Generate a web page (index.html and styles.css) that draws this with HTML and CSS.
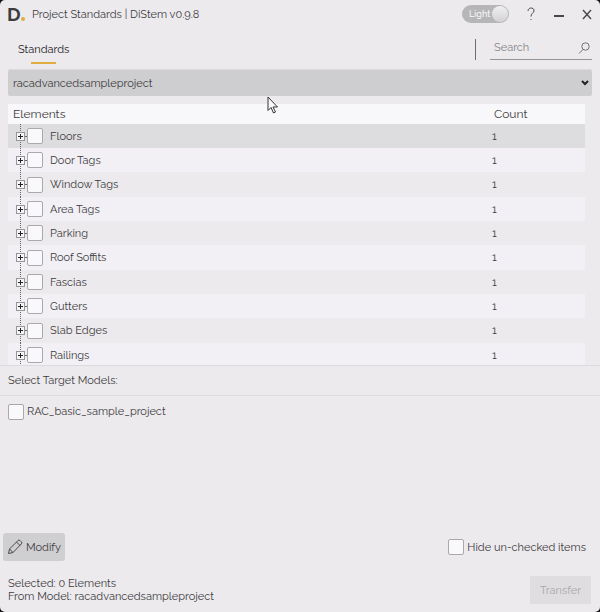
FILE: index.html
```html
<!DOCTYPE html>
<html lang="en">
<head>
<meta charset="utf-8">
<meta name="viewport" content="width=device-width, initial-scale=1">
<title>Project Standards | DiStem v0.9.8</title>
<link rel="stylesheet" href="styles.css">
</head>
<body>
<div class="window">
  <header class="titlebar">
    <span class="logo">D<span class="logo-dot"></span></span>
    <h1 class="title">Project Standards | DiStem v0.9.8</h1>
    <label class="theme"><input type="checkbox" role="switch" checked><span>Light</span></label>
    <button class="win-btn help" type="button" aria-label="Help">
      <svg width="10" height="14" viewBox="0 0 10 14"><path d="M2 4C2 0 8.500 0 8 4C7.700 6 5 6.500 5 9.500M5 12v1"/></svg>
    </button>
    <button class="win-btn" type="button" aria-label="Minimize">
      <svg width="12" height="14" viewBox="0 0 12 14"><path class="heavy" d="M1 9h10"/></svg>
    </button>
    <button class="win-btn" type="button" aria-label="Close">
      <svg width="12" height="14" viewBox="0 0 12 14"><path class="cross" d="M2 3l8 9M10 3l-8 9"/></svg>
    </button>
  </header>

  <nav class="tabs">
    <a class="tab" href="#standards">Standards</a>
    <label class="search">
      <input type="search" placeholder="Search" aria-label="Search">
      <svg width="12" height="12" viewBox="0 0 12 12"><circle cx="7.500" cy="4.500" r="3.700"/><path d="M5 7.500L1 11.500"/></svg>
    </label>
  </nav>

  <main class="content" id="standards">
    <div class="project">
      <select aria-label="Source project"><option>racadvancedsampleproject</option></select>
      <svg width="8" height="6" viewBox="0 0 8 6"><path d="M1 1l3 3 3-3"/></svg>
    </div>
    <div class="elements">
      <table>
        <thead><tr><th class="name">Elements</th><th class="count">Count</th></tr></thead>
        <tbody>
          <tr class="selected"><td><div class="node"><button type="button" aria-label="Expand Floors"></button><label><input type="checkbox">Floors</label></div></td><td>1</td></tr>
          <tr><td><div class="node"><button type="button" aria-label="Expand Door Tags"></button><label><input type="checkbox">Door Tags</label></div></td><td>1</td></tr>
          <tr><td><div class="node"><button type="button" aria-label="Expand Window Tags"></button><label><input type="checkbox">Window Tags</label></div></td><td>1</td></tr>
          <tr><td><div class="node"><button type="button" aria-label="Expand Area Tags"></button><label><input type="checkbox">Area Tags</label></div></td><td>1</td></tr>
          <tr><td><div class="node"><button type="button" aria-label="Expand Parking"></button><label><input type="checkbox">Parking</label></div></td><td>1</td></tr>
          <tr><td><div class="node"><button type="button" aria-label="Expand Roof Soffits"></button><label><input type="checkbox">Roof Soffits</label></div></td><td>1</td></tr>
          <tr><td><div class="node"><button type="button" aria-label="Expand Fascias"></button><label><input type="checkbox">Fascias</label></div></td><td>1</td></tr>
          <tr><td><div class="node"><button type="button" aria-label="Expand Gutters"></button><label><input type="checkbox">Gutters</label></div></td><td>1</td></tr>
          <tr><td><div class="node"><button type="button" aria-label="Expand Slab Edges"></button><label><input type="checkbox">Slab Edges</label></div></td><td>1</td></tr>
          <tr><td><div class="node"><button type="button" aria-label="Expand Railings"></button><label><input type="checkbox">Railings</label></div></td><td>1</td></tr>
        </tbody>
      </table>
    </div>
    <h2 class="targets-title">Select Target Models:</h2>
    <div class="targets">
      <label class="check"><input type="checkbox">RAC_basic_sample_project</label>
    </div>
  </main>

  <div class="actions">
    <button class="modify" type="button">
      <svg width="16" height="16" viewBox="0 0 16 16"><path d="M1.500 14.500l1-4.500L11 1.500q1-1 2.200.2l1 1q1.200 1.200.2 2.200L6 13.500zM2.500 10L6 13.500M9.500 3l3.500 3.500"/></svg>
      Modify
    </button>
    <label class="check"><input type="checkbox">Hide un-checked items</label>
  </div>

  <footer class="status">
    <p>Selected: 0 Elements<br>From Model: racadvancedsampleproject</p>
    <button class="transfer" type="button" disabled>Transfer</button>
  </footer>

  <svg class="pointer" width="12" height="18" viewBox="0 0 12 18" aria-hidden="true"><path d="M1 1v13.500l3-3 2.500 5.500 2-1-2.500-5H10.500z"/></svg>
</div>
</body>
</html>
```
FILE: styles.css
```css
* { box-sizing: border-box; }

html { background: #111; }

body {
  margin: 0;
  color: #3c3b3d;
  font: 11px/15px Raleway, Lato, "Open Sans", sans-serif;
}

button, input, select { font: inherit; color: inherit; margin: 0; }
button { padding: 0; border: 0; background: none; }
svg { flex: none; fill: none; stroke: #48474a; stroke-width: 1; }

.window {
  position: relative;
  display: flex;
  flex-direction: column;
  height: 100vh;
  overflow: hidden;
  border-radius: 5px;
  background: #eceaed;
}

input[type="checkbox"] {
  flex: none;
  appearance: none;
  width: 16px;
  height: 16px;
  border: 1px solid #aaa8ab;
  border-radius: 2px;
  background: #f9f8fb;
}

/* Title bar */
.titlebar {
  display: flex;
  align-items: center;
  flex: none;
  height: 28px;
  padding: 0 7px;
}

.logo {
  display: flex;
  align-items: baseline;
  width: 25px;
  font-size: 19px;
  font-weight: 700;
  line-height: 20px;
}

.logo-dot {
  width: 4px;
  height: 4px;
  border-radius: 2px;
  background: #e0ad3e;
}

.title {
  flex: 1;
  margin: 0;
  font-size: 11px;
  font-weight: 400;
}

.theme {
  display: flex;
  align-items: center;
  flex-direction: row-reverse;
  justify-content: space-between;
  width: 47px;
  height: 18px;
  margin-right: 8px;
  padding: 0 1px 0 7px;
  border-radius: 9px;
  background: #b6b5b7;
  color: #f8f7f9;
  font-size: 9px;
  font-weight: 500;
}

.theme input[type="checkbox"] {
  width: 16px;
  border: 0;
  border-radius: 8px;
  background: linear-gradient(#f0eff1, #d2d1d3);
}

.win-btn {
  display: grid;
  place-items: center;
  width: 28px;
  height: 28px;
}

.win-btn:last-child { margin-right: -8px; }
.win-btn .heavy { stroke-width: 2; }
.win-btn .cross { stroke-width: 1.4; }

/* Tabs and search */
.tabs {
  display: flex;
  justify-content: space-between;
  flex: none;
  height: 42px;
  margin: 0 8px;
  border-bottom: 1px solid #dcdadd;
}

.tab {
  display: flex;
  flex-direction: column;
  align-items: center;
  gap: 5px;
  padding: 14px 10px 0;
  color: #222123;
  text-decoration: none;
}

.tab::after {
  content: "";
  width: 25px;
  height: 2px;
  background: #e0ad3e;
}

.search {
  display: flex;
  align-items: center;
  height: 21px;
  margin-top: 11px;
  padding-left: 14px;
  border-left: 1px solid #6e6d70;
}

.search input {
  width: 102px;
  height: 21px;
  padding: 0 4px 4px;
  border: 0;
  border-bottom: 1px solid #959397;
  outline: 0;
  background: none;
}

.search input::placeholder { color: #858387; opacity: 1; }
.search svg { margin: 0 2px 4px -14px; stroke: #737175; }

/* Source project and its elements */
.content {
  display: flex;
  flex: 1;
  flex-direction: column;
  min-height: 0;
}

.project {
  display: flex;
  align-items: center;
  flex: none;
  margin: 0 8px 8px;
}

.project select {
  flex: 1;
  appearance: none;
  height: 26px;
  padding: 0 20px 0 5px;
  border: 0;
  border-radius: 2px;
  background: #cecdcf;
}

.project svg {
  margin-left: -11px;
  margin-right: 3px;
  stroke: #222123;
  stroke-width: 2;
  pointer-events: none;
}

.elements {
  flex: 260 1 0;
  min-height: 0;
  margin: 0 15px 0 8px;
  overflow: auto;
  scrollbar-width: none;
}

table {
  width: 100%;
  border-collapse: collapse;
}

th, td { padding: 0; text-align: left; }

th {
  height: 20px;
  padding-left: 5px;
  background: #f8f7fa;
  font-size: 12px;
  font-weight: 400;
}

.count { width: 96px; padding-left: 5px; }

td { height: 24px; }
td + td { padding-left: 3px; }
tr:nth-child(3n) td { height: 25px; }
tbody tr:nth-child(even) { background: #f2f0f4; }
tbody .selected { background: #dddcdf; }

td:first-child {
  background: repeating-linear-gradient(#656366 0 1px, transparent 1px 2px) 12px 0 / 1px 100% no-repeat;
}

.node {
  display: flex;
  align-items: center;
  padding-left: 8px;
}

.node button {
  width: 9px;
  height: 9px;
  border: 1px solid #97959a;
  background:
    linear-gradient(#222, #222) center / 5px 1px no-repeat,
    linear-gradient(#222, #222) center / 1px 5px no-repeat,
    #f5f4f6;
}

.node::before { content: ""; order: 1; width: 2px; border-top: 1px dotted #656366; }

.node label {
  display: flex;
  align-items: center;
  order: 2;
  gap: 7px;
}

/* Target models */
.targets-title {
  flex: none;
  margin: 0;
  padding: 7px 8px;
  border: solid #dcdadd;
  border-width: 1px 0;
  font-size: 11px;
  font-weight: 400;
}

.targets {
  flex: 121 1 0;
  min-height: 0;
  padding: 8px;
  overflow: auto;
}

.check {
  display: flex;
  align-items: center;
  gap: 3px;
}

/* Bottom actions and status */
.actions {
  display: flex;
  align-items: center;
  justify-content: space-between;
  flex: none;
  padding: 0 14px 0 3px;
}

.modify {
  display: flex;
  align-items: center;
  gap: 3px;
  height: 28px;
  padding: 0 4px;
  border-radius: 3px;
  background: #cfced0;
}

.status {
  display: flex;
  align-items: center;
  justify-content: space-between;
  flex: none;
  padding: 15px 9px 8px 8px;
}

.status p { margin: 0; line-height: 13px; }

.transfer {
  width: 61px;
  height: 28px;
  background: #dfdde0;
  color: #aaa8ac;
}

.pointer {
  position: absolute;
  top: 96px;
  left: 267px;
  fill: #f8f7fa;
  stroke: #333;
}
```
